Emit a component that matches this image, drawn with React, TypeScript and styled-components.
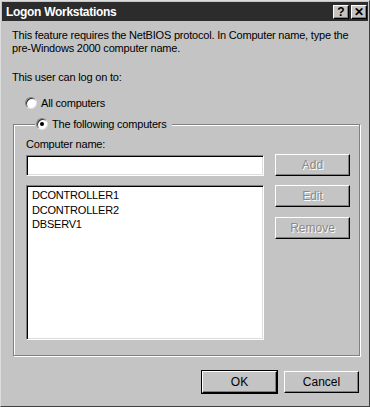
import React from "react";
import styled, { createGlobalStyle } from "styled-components";

const Global = createGlobalStyle`
  html, body { margin: 0; padding: 0; background: #c4c4c4; }
  * { box-sizing: border-box; }
`;

const Window = styled.div`
  width: 370px;
  height: 407px;
  background: #c4c4c4;
  border-top: 1px solid #dcdcdc;
  border-left: 1px solid #dcdcdc;
  border-right: 1px solid #404040;
  border-bottom: 1px solid #404040;
  padding: 1px;
  display: flex;
  flex-direction: column;
  font-family: "Liberation Sans", Arial, sans-serif;
  font-size: 11px;
  letter-spacing: -0.2px;
  color: #000;
  white-space: nowrap;
`;

const TitleBar = styled.div`
  height: 19px;
  background: #2c2c2c;
  display: flex;
  align-items: center;
  justify-content: space-between;
  padding: 0 1px 0 4px;
`;

const Title = styled.div`
  color: #fff;
  font-weight: bold;
  font-size: 12px;
  letter-spacing: -0.3px;
`;

const TitleButtons = styled.div`
  display: flex;
  gap: 2px;
`;

const CaptionButton = styled.div`
  width: 16px;
  height: 14px;
  background: #c4c4c4;
  border-top: 1px solid #fff;
  border-left: 1px solid #fff;
  border-right: 1px solid #000;
  border-bottom: 1px solid #000;
  box-shadow: inset -1px -1px 0 #808080;
  display: flex;
  align-items: center;
  justify-content: center;
  font-weight: bold;
  font-size: 12px;
  line-height: 1;
  color: #000;
  letter-spacing: 0;
`;

const Body = styled.div`
  flex: 1;
  display: flex;
  flex-direction: column;
  padding: 8px 9px 0 10px;
`;

const Desc = styled.p`
  margin: 0;
  line-height: 13px;
`;

const Label = styled.div<{ $mt: number }>`
  line-height: 13px;
  margin-top: ${(p) => p.$mt}px;
`;

const RadioRow = styled.div<{ $mt?: number }>`
  display: flex;
  align-items: center;
  gap: 4px;
  margin-top: ${(p) => p.$mt ?? 0}px;
  margin-left: 13px;
  height: 14px;
`;

const RadioCircle = styled.span<{ $checked?: boolean }>`
  width: 12px;
  height: 12px;
  border-radius: 50%;
  background: #fff;
  border: 1px solid;
  border-color: #808080 #e0e0e0 #e0e0e0 #808080;
  box-shadow: inset 1px 1px 0 #303030;
  display: flex;
  align-items: center;
  justify-content: center;
  &::after {
    content: "";
    width: 4px;
    height: 4px;
    border-radius: 50%;
    background: ${(p) => (p.$checked ? "#000" : "transparent")};
  }
`;

const Group = styled.fieldset`
  margin: 7px 0 0 1px;
  width: 347px;
  padding: 7px 12px 15px 12px;
  border: 1px solid #808080;
  box-shadow: 1px 1px 0 #fff, inset 1px 1px 0 #fff;
  min-width: 0;
`;

const Legend = styled.legend`
  padding: 0 5px 0 1px;
  margin-left: 9px;
  background: #c4c4c4;
  height: 14px;
`;

const LegendRow = styled.div`
  display: flex;
  align-items: center;
  gap: 4px;
  height: 14px;
`;

const GroupInner = styled.div`
  display: grid;
  grid-template-columns: 238px 75px;
  column-gap: 11px;
`;

const FieldLabel = styled.div`
  grid-column: 1 / 3;
  line-height: 13px;
  margin-bottom: 4px;
`;

const Sunken = styled.div<{ $h: number; $mt?: number }>`
  height: ${(p) => p.$h}px;
  margin-top: ${(p) => p.$mt ?? 0}px;
  background: #fff;
  border-top: 1px solid #808080;
  border-left: 1px solid #808080;
  border-right: 1px solid #fff;
  border-bottom: 1px solid #fff;
  box-shadow: inset 1px 1px 0 #000, inset -1px -1px 0 #dcdcdc;
  padding: 2px 5px;
`;

const ListItem = styled.div`
  line-height: 14.5px;
`;

const ButtonCol = styled.div`
  display: flex;
  flex-direction: column;
  gap: 10px;
  margin-top: 9px;
`;

const Button = styled.div<{ $disabled?: boolean; $default?: boolean; $mt?: number }>`
  width: 75px;
  height: 22px;
  margin-top: ${(p) => p.$mt ?? 0}px;
  background: #c4c4c4;
  border-top: 1px solid #fff;
  border-left: 1px solid #fff;
  border-right: 1px solid #000;
  border-bottom: 1px solid #000;
  box-shadow: inset -1px -1px 0 #808080;
  display: flex;
  align-items: center;
  justify-content: center;
  color: ${(p) => (p.$disabled ? "#8a8a8a" : "#000")};
  text-shadow: ${(p) => (p.$disabled ? "1px 1px 0 #fff" : "none")};
  outline: ${(p) => (p.$default ? "1px solid #000" : "none")};
  font-size: 12px;
  letter-spacing: 0;
`;

const Footer = styled.div`
  display: flex;
  justify-content: flex-end;
  gap: 7px;
  margin-top: 15px;
`;

export default function App() {
  return (
    <>
      <Global />
      <Window>
        <TitleBar>
          <Title>Logon Workstations</Title>
          <TitleButtons>
            <CaptionButton>?</CaptionButton>
            <CaptionButton>✕</CaptionButton>
          </TitleButtons>
        </TitleBar>
        <Body>
          <Desc>
            This feature requires the NetBIOS protocol. In Computer name, type the
            <br />
            pre-Windows 2000 computer name.
          </Desc>
          <Label $mt={16}>This user can log on to:</Label>
          <RadioRow $mt={12}>
            <RadioCircle />
            <span>All computers</span>
          </RadioRow>
          <Group>
            <Legend>
              <LegendRow>
                <RadioCircle $checked />
                <span>The following computers</span>
              </LegendRow>
            </Legend>
            <GroupInner>
              <FieldLabel>Computer name:</FieldLabel>
              <Sunken $h={21} />
              <Button $disabled $mt={-1}>Add</Button>
              <Sunken $h={155} $mt={9}>
                <ListItem>DCONTROLLER1</ListItem>
                <ListItem>DCONTROLLER2</ListItem>
                <ListItem>DBSERV1</ListItem>
              </Sunken>
              <ButtonCol>
                <Button $disabled>Edit</Button>
                <Button $disabled>Remove</Button>
              </ButtonCol>
            </GroupInner>
          </Group>
          <Footer>
            <Button $default>OK</Button>
            <Button>Cancel</Button>
          </Footer>
        </Body>
      </Window>
    </>
  );
}
